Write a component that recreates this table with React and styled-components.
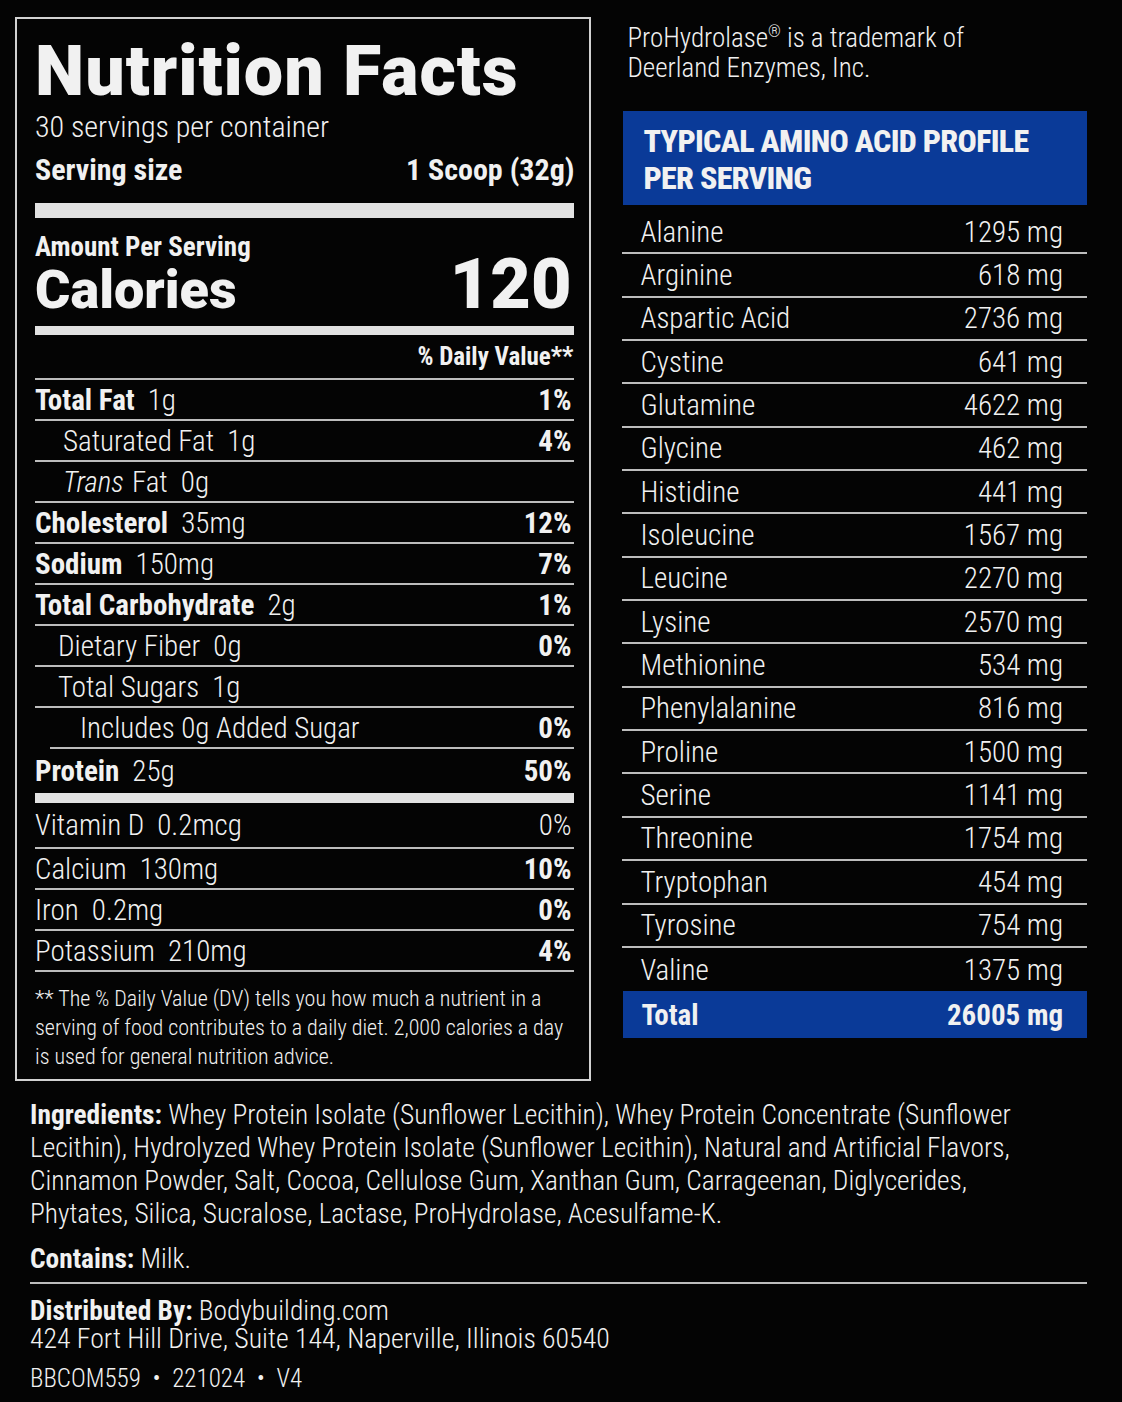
import React from "react";
import styled, { createGlobalStyle } from "styled-components";

const GlobalStyle = createGlobalStyle`
  body {
    margin: 0;
    background: #040404;
    color: #f1f1f1;
    font-family: Roboto, "Liberation Sans", sans-serif;
    font-stretch: condensed;
    font-weight: 300;
  }
`;

const Page = styled.div`
  width: 1122px;
  height: 1402px;
  box-sizing: border-box;
  padding: 17px 35px 0 15px;
  display: flex;
  flex-direction: column;
  overflow: hidden;
`;

const Top = styled.div`
  display: flex;
  gap: 31px;
  align-items: flex-start;
`;

const Panel = styled.div`
  width: 577px;
  height: 1064px;
  box-sizing: border-box;
  border: 2px solid #d2d2d2;
  padding: 12px 15px 0 18px;
  display: flex;
  flex-direction: column;
`;

const Title = styled.div`
  font-weight: 900;
  font-stretch: normal;
  font-size: 70px;
  line-height: 81px;
  letter-spacing: 1px;
`;

const Servings = styled.div`
  font-size: 30px;
  line-height: 34px;
  margin-top: -2px;
`;

const Between = styled.div`
  display: flex;
  justify-content: space-between;
  align-items: center;
`;

const ServingRow = styled(Between)`
  font-weight: 700;
  font-size: 30px;
  line-height: 38px;
  margin-top: 7px;
`;

const Bar = styled.div`
  height: ${(p) => p.$h}px;
  background: #e2e2e2;
  margin-top: ${(p) => p.$top || 0}px;
`;

const AmountLabel = styled.div`
  font-weight: 700;
  font-size: 27px;
  line-height: 28px;
  margin-top: 15px;
`;

const CaloriesRow = styled(Between)`
  font-weight: 900;
  font-stretch: normal;
  align-items: baseline;
  margin-top: -8px;
`;

const CaloriesLabel = styled.span`
  font-size: 54px;
  line-height: 62px;
`;

const CaloriesValue = styled.span`
  font-size: 70px;
  line-height: 62px;
  padding-right: 3px;
`;

const DVHeader = styled.div`
  text-align: right;
  font-weight: 700;
  font-size: 25px;
  line-height: 43px;
  padding-right: 1px;
  border-bottom: 2px solid #bdbdbd;
`;

const Row = styled.div`
  height: ${(p) => p.$h || 41}px;
  box-sizing: border-box;
  display: flex;
  align-items: center;
  justify-content: space-between;
  margin-left: ${(p) => p.$inset || 0}px;
  padding-left: ${(p) => p.$indent || 0}px;
  padding-right: 3px;
  font-size: 29px;
  border-bottom: ${(p) => (p.$noRule ? "none" : "2px solid #bdbdbd")};
`;

const Name = styled.span`
  font-weight: 700;
  margin-right: 13px;
`;

const Italic = styled.span`
  font-style: italic;
  margin-right: 8px;
`;

const Pct = styled.span`
  font-weight: ${(p) => (p.$light ? 300 : 700)};
`;

const Footnote = styled.div`
  font-size: 22px;
  line-height: 29px;
  margin-top: 12px;
`;

const Side = styled.div`
  width: 465px;
  display: flex;
  flex-direction: column;
`;

const Trademark = styled.div`
  font-size: 27px;
  line-height: 30px;
  padding-left: 5px;
  margin-top: 6px;

  sup {
    font-size: 16px;
    line-height: 0;
    vertical-align: 10px;
  }
`;

const AminoHeader = styled.div`
  margin-top: 28px;
  margin-left: 1px;
  height: 94px;
  box-sizing: border-box;
  background: #0a3a98;
  padding: 12px 20px;
  font-weight: 800;
  font-size: 32px;
  line-height: 37px;
  letter-spacing: -0.7px;
  white-space: nowrap;
`;

const AminoList = styled.div`
  padding-top: 6px;
`;

const AminoRow = styled.div`
  height: 43.35px;
  box-sizing: border-box;
  display: flex;
  align-items: center;
  justify-content: space-between;
  padding: 0 24px 0 18px;
  font-size: 29px;
  border-bottom: ${(p) => (p.$last ? "none" : "2px solid #bdbdbd")};
`;

const TotalRow = styled(AminoRow)`
  height: 47px;
  background: #0a3a98;
  font-weight: 700;
  margin-left: 1px;
  border-bottom: none;
`;

const Info = styled.div`
  padding-left: 15px;
  margin-top: 18px;
  font-size: 27.4px;
  line-height: 33px;
`;

const Para = styled.p`
  margin: 0 0 ${(p) => p.$gap || 0}px;
`;

const Line = styled.div`
  height: 28px;
  line-height: 28px;
  font-size: ${(p) => p.$size || 27.4}px;
`;

const Label = styled.b`
  font-weight: 700;
`;

const Rule = styled.div`
  height: 2px;
  background: #bdbdbd;
  margin: 6px 0 13px;
`;

const Codes = styled(Line)`
  font-size: 25px;
  word-spacing: 6px;
  margin-top: 12px;
`;

const nutrients = [
  { name: "Total Fat", amount: "1g", pct: "1%" },
  { label: "Saturated Fat", amount: "1g", pct: "4%", indent: 28 },
  { trans: true, amount: "0g", indent: 28 },
  { name: "Cholesterol", amount: "35mg", pct: "12%" },
  { name: "Sodium", amount: "150mg", pct: "7%" },
  { name: "Total Carbohydrate", amount: "2g", pct: "1%" },
  { label: "Dietary Fiber", amount: "0g", pct: "0%", indent: 23 },
  { label: "Total Sugars", amount: "1g", indent: 23 },
  { label: "Includes 0g Added Sugar", pct: "0%", indent: 45, inset: 15 },
  { name: "Protein", amount: "25g", pct: "50%", last: true },
];

const vitamins = [
  { label: "Vitamin D", amount: "0.2mcg", pct: "0%", light: true },
  { label: "Calcium", amount: "130mg", pct: "10%" },
  { label: "Iron", amount: "0.2mg", pct: "0%" },
  { label: "Potassium", amount: "210mg", pct: "4%" },
];

const aminos = [
  ["Alanine", 1295],
  ["Arginine", 618],
  ["Aspartic Acid", 2736],
  ["Cystine", 641],
  ["Glutamine", 4622],
  ["Glycine", 462],
  ["Histidine", 441],
  ["Isoleucine", 1567],
  ["Leucine", 2270],
  ["Lysine", 2570],
  ["Methionine", 534],
  ["Phenylalanine", 816],
  ["Proline", 1500],
  ["Serine", 1141],
  ["Threonine", 1754],
  ["Tryptophan", 454],
  ["Tyrosine", 754],
  ["Valine", 1375],
];

const App = () => {
  return (
    <Page>
      <GlobalStyle />
      <Top>
        <Panel>
          <Title>Nutrition Facts</Title>
          <Servings>30 servings per container</Servings>
          <ServingRow>
            <span>Serving size</span>
            <span>1 Scoop (32g)</span>
          </ServingRow>
          <Bar $h={15} $top={14} />
          <AmountLabel>Amount Per Serving</AmountLabel>
          <CaloriesRow>
            <CaloriesLabel>Calories</CaloriesLabel>
            <CaloriesValue>120</CaloriesValue>
          </CaloriesRow>
          <Bar $h={9} $top={5} />
          <DVHeader>% Daily Value**</DVHeader>
          {nutrients.map((n, i) => (
            <Row
              key={i}
              $indent={n.indent ? n.indent - (n.inset || 0) : 0}
              $inset={n.inset}
              $noRule={n.last}
              $h={n.last ? 44 : 41}
            >
              <span>
                {n.name && <Name>{n.name}</Name>}
                {n.trans && (
                  <>
                    <Italic>Trans</Italic>Fat&nbsp;{" "}
                  </>
                )}
                {n.label && <>{n.label}&nbsp; </>}
                {n.amount}
              </span>
              {n.pct && <Pct>{n.pct}</Pct>}
            </Row>
          ))}
          <Bar $h={10} />
          {vitamins.map((v, i) => (
            <Row key={i} $h={i === 0 ? 46 : 41}>
              <span>
                {v.label}&nbsp; {v.amount}
              </span>
              <Pct $light={v.light}>{v.pct}</Pct>
            </Row>
          ))}
          <Footnote>
            ** The % Daily Value (DV) tells you how much a nutrient in a
            <br />
            serving of food contributes to a daily diet. 2,000 calories a day
            <br />
            is used for general nutrition advice.
          </Footnote>
        </Panel>

        <Side>
          <Trademark>
            ProHydrolase<sup>®</sup> is a trademark of
            <br />
            Deerland Enzymes, Inc.
          </Trademark>
          <AminoHeader>
            TYPICAL AMINO ACID PROFILE
            <br />
            PER SERVING
          </AminoHeader>
          <AminoList>
            {aminos.map(([name, mg], i) => (
              <AminoRow key={name} $last={i === aminos.length - 1}>
                <span>{name}</span>
                <span>{mg} mg</span>
              </AminoRow>
            ))}
          </AminoList>
          <TotalRow>
            <span>Total</span>
            <span>26005 mg</span>
          </TotalRow>
        </Side>
      </Top>

      <Info>
        <Para $gap={12}>
          <Label>Ingredients:</Label> Whey Protein Isolate (Sunflower Lecithin),
          Whey Protein Concentrate (Sunflower
          <br />
          Lecithin), Hydrolyzed Whey Protein Isolate (Sunflower Lecithin),
          Natural and Artificial Flavors,
          <br />
          Cinnamon Powder, Salt, Cocoa, Cellulose Gum, Xanthan Gum, Carrageenan,
          Diglycerides,
          <br />
          Phytates, Silica, Sucralose, Lactase, ProHydrolase, Acesulfame-K.
        </Para>
        <Para>
          <Label>Contains:</Label> Milk.
        </Para>
        <Rule />
        <Line>
          <Label>Distributed By:</Label> Bodybuilding.com
        </Line>
        <Line $size={27.8}>
          424 Fort Hill Drive, Suite 144, Naperville, Illinois 60540
        </Line>
        <Codes>BBCOM559 • 221024 • V4</Codes>
      </Info>
    </Page>
  );
};

export default App;
